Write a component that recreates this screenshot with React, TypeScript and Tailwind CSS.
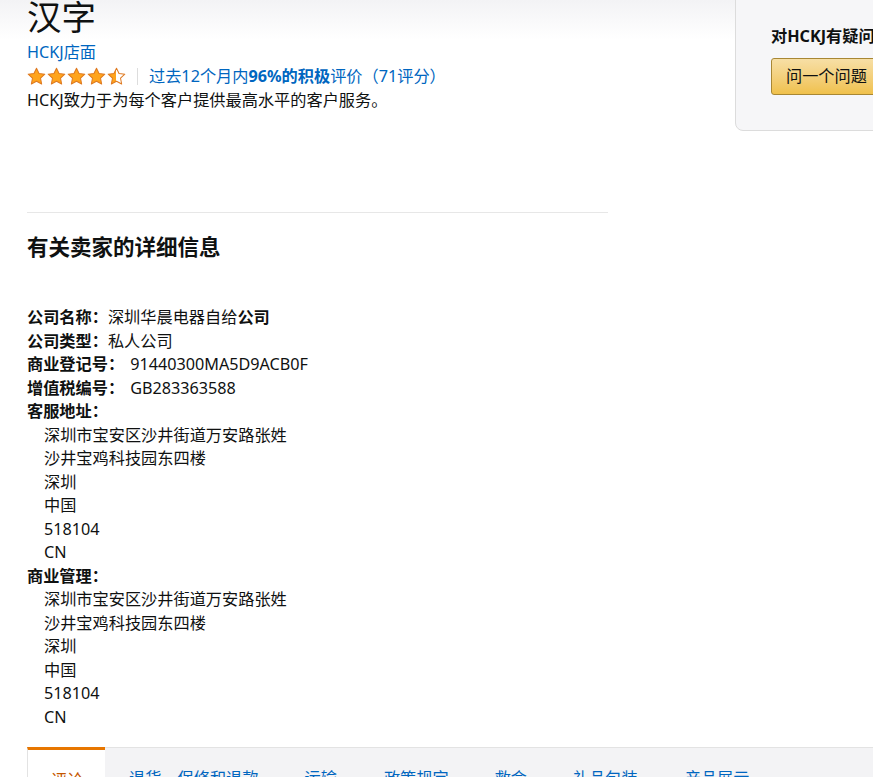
import React from "react";

const font = { fontFamily: '"Noto Sans", "Noto Sans CJK SC", sans-serif' };

function Star({ fill }: { fill: "full" | "half" }) {
  const id = fill === "half" ? "halfgrad" : undefined;
  return (
    <svg width="19" height="19" viewBox="0 0 24 24" className="block">
      {id && (
        <defs>
          <linearGradient id={id} x1="0" x2="1" y1="0" y2="0">
            <stop offset="50%" stopColor="#FFA41C" />
            <stop offset="50%" stopColor="#ffffff" />
          </linearGradient>
        </defs>
      )}
      <path
        d="M12 1.5l3.2 6.7 7.3.9-5.4 5.1 1.4 7.3L12 18l-6.5 3.5 1.4-7.3-5.4-5.1 7.3-.9z"
        fill={id ? `url(#${id})` : "#FFA41C"}
        stroke="#DE7921"
        strokeWidth="1.3"
        strokeLinejoin="round"
      />
    </svg>
  );
}

const addr = [
  "深圳市宝安区沙井街道万安路张姓",
  "沙井宝鸡科技园东四楼",
  "深圳",
  "中国",
  "518104",
  "CN",
];

export default function App() {
  return (
    <div
      className="relative w-[873px] h-[777px] overflow-hidden bg-white text-[#0f1111]"
      style={font}
    >
      <div className="absolute inset-x-0 top-0 h-[40px] bg-gradient-to-b from-[#f3f3f5] to-white" />
      <div className="relative flex">
        {/* main column */}
        <div className="ml-[27px] w-[581px] shrink-0">
          <h1 className="mt-[-3px] text-[34.5px] leading-[40px] font-normal text-[#0f1111]">
            汉字
          </h1>
          <div className="mt-[3px] text-[16.2px] leading-[24px] text-[#0066c0]">HCKJ店面</div>
          <div className="flex items-center h-[24px]">
            <div className="flex gap-px">
              <Star fill="full" />
              <Star fill="full" />
              <Star fill="full" />
              <Star fill="full" />
              <Star fill="half" />
            </div>
            <div className="ml-[11px] h-[17px] w-px bg-[#ddd]" />
            <div className="ml-[11px] text-[16.2px] leading-[24px] text-[#0066c0]">
              过去12个月内<span className="font-bold">96%的积极</span>评价（71评分）
            </div>
          </div>
          <div className="text-[16.2px] leading-[24px]">HCKJ致力于为每个客户提供最高水平的客户服务。</div>
          <div className="mt-[100px] h-px bg-[#e7e7e7]" />
          <h3 className="mt-[19px] text-[21.5px] leading-[30px] font-bold">有关卖家的详细信息</h3>
          <div className="mt-[44px] text-[16.2px] leading-[23.5px]">
            <div>
              <span className="font-bold">公司名称：</span>深圳华晨电器自给<span className="font-bold">公司</span>
            </div>
            <div>
              <span className="font-bold">公司类型：</span>私人公司
            </div>
            <div>
              <span className="font-bold">商业登记号：</span>
              <span className="ml-[6px]">91440300MA5D9ACB0F</span>
            </div>
            <div>
              <span className="font-bold">增值税编号：</span>
              <span className="ml-[6px]">GB283363588</span>
            </div>
            <div className="font-bold">客服地址：</div>
            {addr.map((a, i) => (
              <div key={"a" + i} className="pl-[17px]">
                {a}
              </div>
            ))}
            <div className="font-bold">商业管理：</div>
            {addr.map((a, i) => (
              <div key={"b" + i} className="pl-[17px]">
                {a}
              </div>
            ))}
          </div>
        </div>
        {/* sidebar */}
        <div className="ml-[127px] mt-[-20px] w-[300px] h-[151px] shrink-0 rounded-[8px] border border-[#dcdcdc] bg-[#f6f6f8] pl-[35px] pt-[43px]">
          <div className="text-[16.2px] leading-[24px] font-bold whitespace-nowrap">对HCKJ有疑问吗？</div>
          <div className="mt-[10px] h-[37px] w-[200px] rounded-[3px] border border-[#a88734] bg-gradient-to-b from-[#f7dfa5] to-[#f0c14b] pl-[14px] text-[16.2px] leading-[35px]">
            问一个问题
          </div>
        </div>
      </div>
      {/* tabs */}
      <div className="mt-[18px] ml-[27px] flex h-[60px] border-t border-[#e3e3e3] bg-[#f3f3f5] text-[16.2px] leading-[24px] text-[#0066c0]">
        <div className="w-[78px] shrink-0 bg-white border-t-[3px] border-t-[#e77600] border-l border-[#e3e3e3] -mt-px pl-[23px] pt-[18px] text-[#c45500]">
          评论
        </div>
        <div className="pl-[24px] pt-[18px] whitespace-nowrap">退货、保修和退款</div>
        <div className="pl-[46px] pt-[18px] whitespace-nowrap">运输</div>
        <div className="pl-[47px] pt-[18px] whitespace-nowrap">政策规定</div>
        <div className="pl-[46px] pt-[18px] whitespace-nowrap">救命</div>
        <div className="pl-[46px] pt-[18px] whitespace-nowrap">礼品包装</div>
        <div className="pl-[47px] pt-[18px] whitespace-nowrap">产品展示</div>
      </div>
    </div>
  );
}
